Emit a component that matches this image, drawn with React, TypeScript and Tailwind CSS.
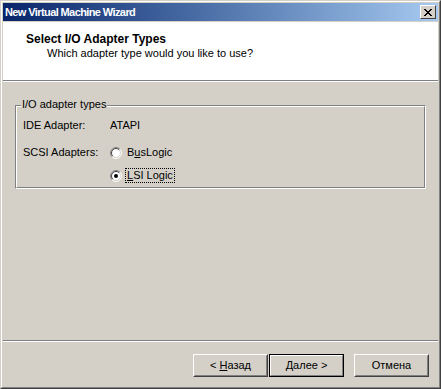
import React from "react";

const font = { fontFamily: '"Liberation Sans", Arial, sans-serif' };

function Radio({ checked }: { checked?: boolean }) {
  return (
    <svg width="12" height="12" viewBox="0 0 12 12" className="shrink-0">
      <circle cx="6" cy="6" r="5" fill="#ffffff" />
      <path d="M2.111 9.889 A5.5 5.5 0 0 1 9.889 2.111" stroke="#808080" strokeWidth="1" fill="none" />
      <path d="M9.889 2.111 A5.5 5.5 0 0 1 2.111 9.889" stroke="#ffffff" strokeWidth="1" fill="none" />
      <path d="M2.818 9.182 A4.5 4.5 0 0 1 9.182 2.818" stroke="#404040" strokeWidth="1" fill="none" />
      <path d="M9.182 2.818 A4.5 4.5 0 0 1 2.818 9.182" stroke="#d4d0c8" strokeWidth="1" fill="none" />
      {checked && <circle cx="6" cy="6" r="2" fill="#000000" />}
    </svg>
  );
}

function Btn({ children, def }: { children: React.ReactNode; def?: boolean }) {
  if (def) {
    return (
      <div className="w-[75px] h-[23px] border border-black box-border">
        <div className="h-full border border-t-white border-l-white border-r-[#808080] border-b-[#808080] flex items-center justify-center text-[11px] text-black">
          {children}
        </div>
      </div>
    );
  }
  return (
    <div className="w-[75px] h-[23px] border border-t-white border-l-white border-r-[#404040] border-b-[#404040] box-border">
      <div className="h-full border border-t-[#d4d0c8] border-l-[#d4d0c8] border-r-[#808080] border-b-[#808080] flex items-center justify-center text-[11px] text-black">
        {children}
      </div>
    </div>
  );
}

export default function App() {
  return (
    <div style={font} className="w-[441px] h-[389px] bg-[#d4d0c8] border border-t-[#d4d0c8] border-l-[#d4d0c8] border-r-[#404040] border-b-[#404040]">
      <div className="h-full border border-t-white border-l-white border-r-[#808080] border-b-[#808080] p-px flex flex-col">
        {/* Title bar */}
        <div className="h-[18px] mb-px flex items-center justify-between bg-gradient-to-r from-[#0a246a] to-[#a6caf0] pl-[2px] pr-[2px] shrink-0">
          <span className="text-white font-bold text-[11px] leading-none tracking-[-0.6px]">New Virtual Machine Wizard</span>
          <div className="w-[16px] h-[14px] bg-[#d4d0c8] border border-t-white border-l-white border-r-[#404040] border-b-[#404040] flex items-center justify-center">
            <svg width="8" height="7" viewBox="0 0 8 7">
              <path d="M0 0h2v1h1v1h2v-1h1v-1h2v1h-1v1h-1v1h-1v1h1v1h1v1h1v1h-2v-1h-1v-1h-2v1h-1v1h-2v-1h1v-1h1v-1h1v-1h-1v-1h-1v-1h-1z" fill="#000" />
            </svg>
          </div>
        </div>

        {/* Header */}
        <div className="h-[58px] bg-white shrink-0 pl-[23px] pt-[10px]">
          <div className="font-bold text-[12px] leading-[14px] text-black">Select I/O Adapter Types</div>
          <div className="text-[11px] leading-[13px] text-black pl-[21px] mt-[1px]">Which adapter type would you like to use?</div>
        </div>
        <div className="h-px bg-[#808080] shrink-0" />
        <div className="h-px bg-white shrink-0" />

        {/* Body */}
        <div className="flex-1 flex flex-col">
          <div className="mt-[23px] mx-[12px] h-[84px] relative border border-t-[#808080] border-l-[#808080] border-r-white border-b-white">
            <div className="h-full border border-t-white border-l-white border-r-[#808080] border-b-[#808080]" />
            <span className="absolute left-[5px] top-[-8px] bg-[#d4d0c8] px-[1px] text-[11px] leading-[13px] text-black">I/O adapter types</span>
            <div className="absolute inset-0 pl-[7px] pt-[13px] text-[11px] leading-[13px] text-black">
              <div className="flex items-center h-[13px]">
                <span className="w-[87px]">IDE Adapter:</span>
                <span>ATAPI</span>
              </div>
              <div className="flex items-center h-[13px] mt-[14px]">
                <span className="w-[87px]">SCSI Adapters:</span>
                <Radio />
                <span className="ml-[5px]">
                  B<span className="underline">u</span>sLogic
                </span>
              </div>
              <div className="flex items-center h-[15px] mt-[9px]">
                <span className="w-[87px]" />
                <Radio checked />
                <span className="ml-[3px] border border-dotted border-black px-px leading-[13px]">
                  <span className="underline">L</span>SI Logic
                </span>
              </div>
            </div>
          </div>
          <div className="flex-1" />
          <div className="h-px bg-[#808080]" />
          <div className="h-px bg-white" />
          <div className="flex justify-end pt-[12px] pb-[9px] pr-[9px]">
            <Btn>
              &lt; <span className="underline ml-[3px]">Н</span>азад
            </Btn>
            <div className="ml-px">
              <Btn def>
                <span className="underline">Д</span>алее &gt;
              </Btn>
            </div>
            <div className="ml-[10px]">
              <Btn>Отмена</Btn>
            </div>
          </div>
        </div>
      </div>
    </div>
  );
}
